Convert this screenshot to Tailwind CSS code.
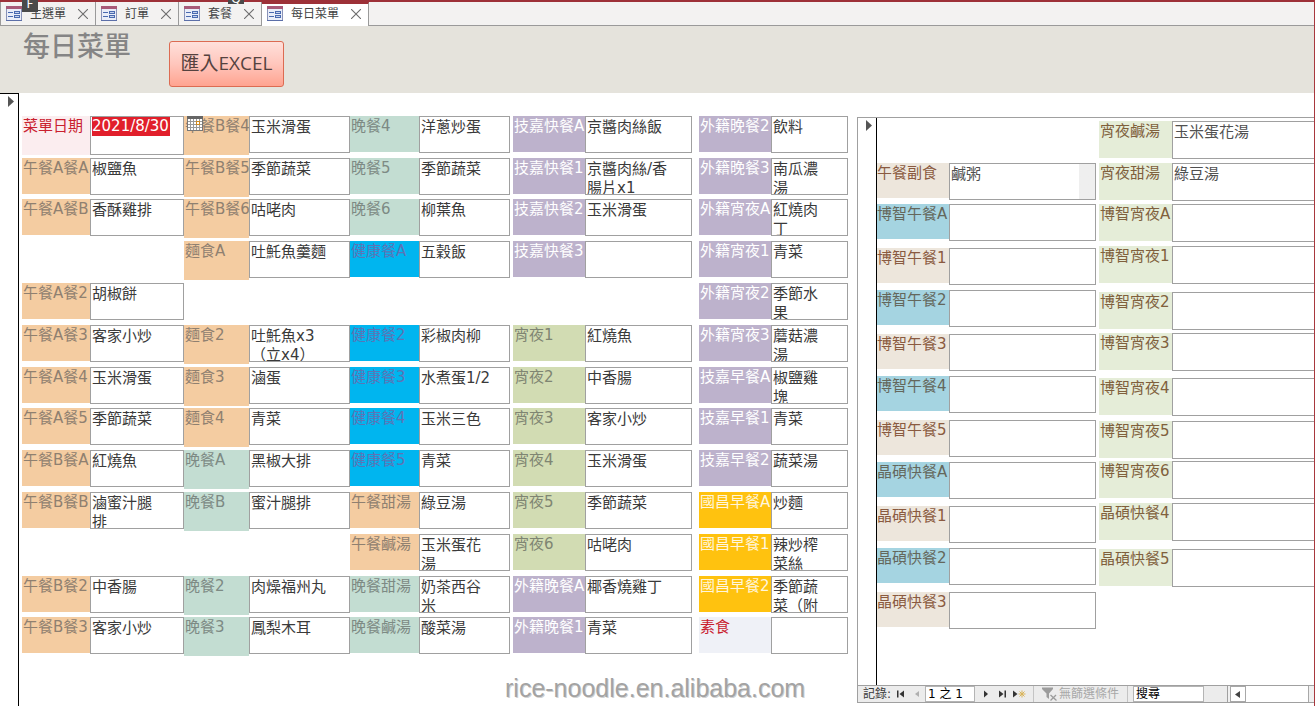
<!doctype html>
<html lang="zh-Hant">
<head>
  <meta charset="UTF-8" />
  <meta name="viewport" content="width=device-width, initial-scale=1.0" />
  <title>每日菜單</title>
  <script src="https://cdn.jsdelivr.net/npm/@tailwindcss/browser@4"></script>
</head>
<body class="relative flex h-screen flex-col overflow-hidden border-r border-[#a8383e] bg-white font-['DejaVu_Sans','Noto_Sans_CJK_TC',sans-serif] text-[15px] leading-[19px] text-[#3a3a3a]">

  <!-- Icons shared by the tabs -->
  <svg class="hidden" aria-hidden="true">
    <symbol id="form-icon" viewBox="0 0 16 16">
      <rect x="0.5" y="0.5" width="15" height="14" fill="#e9edf8" stroke="#8a93b8" />
      <rect x="0" y="0" width="16" height="3" fill="#a85a78" />
      <rect x="0" y="14" width="16" height="1" fill="#5c6fa8" />
      <path d="M2 6.5h5M2 10.5h5" stroke="#4a6ab0" stroke-width="1.2" />
      <rect x="8.5" y="5.5" width="5" height="2" fill="#c5d3ee" stroke="#4a6ab0" />
      <rect x="8.5" y="9.5" width="5" height="2" fill="#c5d3ee" stroke="#4a6ab0" />
    </symbol>
    <symbol id="close-icon" viewBox="0 0 10 10">
      <path d="M0 0l10 10M10 0l-10 10" stroke="#6e6e6e" stroke-width="1.1" />
    </symbol>
  </svg>

  <!-- Tabs -->
  <nav class="flex h-[26px] shrink-0 border-t-2 border-[#9d3138] bg-[#f3f2f1] text-xs leading-[22px] text-[#444444]">
    <div class="flex items-center border-r border-b border-l border-[#9a9a9a] pr-[7px] pl-[5px]">
      <svg class="size-4"><use href="#form-icon" /></svg>
      <a href="#" class="ml-2">主選單</a>
      <button class="ml-3" aria-label="關閉主選單"><svg class="size-2.5"><use href="#close-icon" /></svg></button>
    </div>
    <div class="flex items-center border-r border-b border-[#9a9a9a] pr-[7px] pl-[5px]">
      <svg class="size-4"><use href="#form-icon" /></svg>
      <a href="#" class="ml-2">訂單</a>
      <button class="ml-3" aria-label="關閉訂單"><svg class="size-2.5"><use href="#close-icon" /></svg></button>
    </div>
    <div class="flex items-center border-r border-b border-[#9a9a9a] pr-[7px] pl-[5px]">
      <svg class="size-4"><use href="#form-icon" /></svg>
      <a href="#" class="ml-2">套餐</a>
      <button class="ml-3" aria-label="關閉套餐"><svg class="size-2.5"><use href="#close-icon" /></svg></button>
    </div>
    <div class="flex items-center border-t-2 border-r border-t-[#9d3138] border-r-[#9a9a9a] bg-white pr-[7px] pb-[3px] pl-[5px]">
      <svg class="size-4"><use href="#form-icon" /></svg>
      <a href="#" class="ml-2" aria-current="page">每日菜單</a>
      <button class="ml-3" aria-label="關閉每日菜單"><svg class="size-2.5"><use href="#close-icon" /></svg></button>
    </div>
    <div class="flex-1 border-b border-[#9a9a9a]"></div>
  </nav>

  <!-- Key tips over the tabs -->
  <span class="absolute top-0 left-[22px] h-3 w-4 overflow-hidden bg-[#4a4a4a] text-center text-xs leading-[8px] text-white">F</span>
  <span class="absolute top-0 left-[228px] flex h-1 w-4 items-end justify-center overflow-hidden bg-[#4a4a4a] text-xs leading-[10px] text-white">Q</span>

  <!-- Form header -->
  <header class="flex h-[67px] shrink-0 bg-[#e5e3dc] pl-[23px]">
    <h1 class="mt-[7px] text-[27px] leading-[28px] font-medium text-[#858585]">每日菜單</h1>
    <button class="mt-[15px] ml-[38px] h-[46px] w-[115px] rounded-[3px] border border-[#dc6b52] bg-linear-to-b from-[#ffe0db] via-[#ffc6bc] to-[#ffa390] pb-0.5 font-['Open_Sans','Noto_Sans_CJK_TC',sans-serif] text-[19px] text-[#55423f]">匯入EXCEL</button>
  </header>

  <main class="flex min-h-0 flex-1">
    <!-- Record selector -->
    <div class="w-[19px] shrink-0 border-t border-r border-black pt-0.5 pl-2">
      <svg class="h-[11px] w-[6px]" viewBox="0 0 6 11"><path d="M0 0l6 5.5L0 11z" fill="#555" /></svg>
    </div>

    <div class="grid min-w-0 flex-1 grid-cols-[838fr_457fr]">
      <form id="menu" class="grid grid-cols-[162fr_166fr_163fr_186fr_149fr] grid-rows-[42px_41px_42px_42px_42px_42px_41px_42px_42px_42px_42px_41px_37px] pt-[23px] pr-[9px] pl-[3px]"></form>

      <!-- Subform -->
      <section class="mt-6 mb-[3px] flex min-h-0 min-w-0 flex-col border-t border-l border-[#a0a0a0]">
        <div class="flex min-h-0 flex-1">
          <div class="w-[19px] shrink-0 border-r border-black pt-0.5 pl-2">
            <svg class="h-[11px] w-[6px]" viewBox="0 0 6 11"><path d="M0 0l6 5.5L0 11z" fill="#555" /></svg>
          </div>
          <div class="grid flex-1 grid-cols-[219fr_215fr] content-start gap-x-[3px] pt-[3px] text-[#505050]">
            <div id="sub-left" class="grid grid-rows-[41px_44px_42px_44px_42px_44px_42px_44px_42px_44px_37px] content-start pt-[42px]"></div>
            <div id="sub-right" class="grid grid-rows-[42px_41px_42px_46px_41px_45px_43px_40px_42px_46px_38px] content-start"></div>
          </div>
        </div>

        <!-- Record navigation -->
        <div class="flex h-[18px] shrink-0 items-stretch border-t border-b border-[#a0a0a0] bg-[#ececec] text-xs leading-4">
          <span class="w-[34px] shrink-0 pl-[5px] whitespace-nowrap">記錄:</span>
          <button aria-label="第一筆" class="w-4 pl-[5px]"><svg class="h-2 w-[7px]" viewBox="0 0 7 8"><path d="M0 0.5h1.5v7H0zM7 0.5v7L2.5 4z" fill="#333" /></svg></button>
          <button aria-label="上一筆" class="w-[17px] pl-[7px]"><svg class="h-2 w-1" viewBox="0 0 4 8"><path d="M4 1v6L0 4z" fill="#b0b0b0" /></svg></button>
          <input aria-label="目前記錄" value="1 之 1" class="w-[50px] border border-[#b4b4b4] bg-white pl-0.5 text-black" />
          <button aria-label="下一筆" class="w-5 pl-[9px]"><svg class="h-2 w-1" viewBox="0 0 4 8"><path d="M0 0.5v7L4 4z" fill="#333" /></svg></button>
          <button aria-label="最後一筆" class="w-[14px] pl-1"><svg class="h-2 w-[7px]" viewBox="0 0 7 8"><path d="M5.5 0.5H7v7H5.5zM0 0.5v7L4.5 4z" fill="#333" /></svg></button>
          <button aria-label="新記錄" class="w-6 pl-1"><svg class="h-2 w-[13px]" viewBox="0 0 13 8"><path d="M0 0.5v7L4.5 4z" fill="#333" /><path d="M9 0.5v7M5.5 4h7M6.5 1.5l5 5M11.5 1.5l-5 5" stroke="#d9b45a" /></svg></button>
          <button disabled class="flex items-center border-x border-[#c4c4c4] px-2 text-[#a8a8a8]">
            <svg class="mr-0.5 h-[14px] w-[15px]" viewBox="0 0 15 14"><path d="M0 0.5h11v1.5L7 6.5V12L4.5 10V6.5L0 2z" fill="#9c9c9c" /><path d="M8.5 8l6 5.5M14 8l-5.5 5.5" stroke="#9c9c9c" stroke-width="1.3" /></svg>
            無篩選條件
          </button>
          <input aria-label="搜尋" value="搜尋" class="ml-[5px] w-[71px] min-w-0 border border-[#b4b4b4] bg-white pl-0.5 text-black" />
          <span class="w-6 border-r border-[#a0a0a0]"></span>
          <div class="flex min-w-0 flex-1 bg-[#f0f0f0] pl-0.5">
            <button aria-label="向左捲動" class="w-4 border border-[#a8a8a8] bg-white pl-1"><svg class="h-[7px] w-[5px]" viewBox="0 0 5 7"><path d="M5 0v7L0 3.5z" fill="#444" /></svg></button>
            <div class="mr-[5px] flex-1 border-r border-[#a8a8a8] bg-white"></div>
          </div>
        </div>
      </section>
    </div>
  </main>

  <p class="pointer-events-none absolute top-[674px] left-[505px] font-['Liberation_Sans',sans-serif] text-[25px] leading-[28px] text-[#a3a3a3] text-shadow-[1px_1px_0_#8a8a8a66]">rice-noodle.en.alibaba.com</p>

  <script>
    // Label colours by meal group
    const colors = {
      lunch: 'bg-[#f4cca1] text-[#8f8070]',
      dinner: 'bg-[#c3ddd2] text-[#7d8a84]',
      health: 'bg-[#00b5ef] text-[#5d73b5]',
      night: 'bg-[#d2dcb3] text-[#7f8572]',
      purple: 'bg-[#bdb2cc] text-white',
      gold: 'bg-[#ffc20f] text-[#fff6dc]',
      veg: 'bg-[#eff1f7] text-[#c9202e]',
      beige: 'bg-[#ede6dc] text-[#8a5a40]',
      aqua: 'bg-[#a5d4e1] text-[#64675c]',
      pale: 'bg-[#e5edd8] text-[#80603c]',
    };

    // Every column holds one entry per row, null leaves the slot empty
    const columns = [
      { label: 'w-[68px] h-9', field: '', rows: [
        'date',
        ['午餐A餐A', '椒鹽魚', 'lunch'], ['午餐A餐B', '香酥雞排', 'lunch'], null,
        ['午餐A餐2', '胡椒餅', 'lunch'], ['午餐A餐3', '客家小炒', 'lunch'], ['午餐A餐4', '玉米滑蛋', 'lunch'],
        ['午餐A餐5', '季節蔬菜', 'lunch'], ['午餐B餐A', '紅燒魚', 'lunch'], ['午餐B餐B', '滷蜜汁腿排', 'lunch'], null,
        ['午餐B餐2', '中香腸', 'lunch'], ['午餐B餐3', '客家小炒', 'lunch'] ] },
      { label: 'w-[65px] h-[39px]', field: '', rows: [
        ['午餐B餐4', '玉米滑蛋', 'lunch'], ['午餐B餐5', '季節蔬菜', 'lunch'], ['午餐B餐6', '咕咾肉', 'lunch'],
        ['麵食A', '吐魠魚羹麵', 'lunch'], null, ['麵食2', '吐魠魚x3（立x4）', 'lunch'], ['麵食3', '滷蛋', 'lunch'],
        ['麵食4', '青菜', 'lunch'], ['晚餐A', '黑椒大排', 'dinner'], ['晚餐B', '蜜汁腿排', 'dinner'], null,
        ['晚餐2', '肉燥福州丸', 'dinner'], ['晚餐3', '鳳梨木耳', 'dinner'] ] },
      { label: 'w-[69px] h-9', field: 'mr-[3px]', rows: [
        ['晚餐4', '洋蔥炒蛋', 'dinner'], ['晚餐5', '季節蔬菜', 'dinner'], ['晚餐6', '柳葉魚', 'dinner'],
        ['健康餐A', '五穀飯', 'health'], null, ['健康餐2', '彩椒肉柳', 'health'], ['健康餐3', '水煮蛋1/2', 'health'],
        ['健康餐4', '玉米三色', 'health'], ['健康餐5', '青菜', 'health'], ['午餐甜湯', '綠豆湯', 'lunch'],
        ['午餐鹹湯', '玉米蛋花湯', 'lunch'], ['晚餐甜湯', '奶茶西谷米', 'dinner'], ['晚餐鹹湯', '酸菜湯', 'dinner'] ] },
      { label: 'w-[72px] h-9', field: 'mr-[7px]', rows: [
        ['技嘉快餐A', '京醬肉絲飯', 'purple'], ['技嘉快餐1', '京醬肉絲/香腸片x1', 'purple'], ['技嘉快餐2', '玉米滑蛋', 'purple'],
        ['技嘉快餐3', '', 'purple'], null, ['宵夜1', '紅燒魚', 'night'], ['宵夜2', '中香腸', 'night'],
        ['宵夜3', '客家小炒', 'night'], ['宵夜4', '玉米滑蛋', 'night'], ['宵夜5', '季節蔬菜', 'night'],
        ['宵夜6', '咕咾肉', 'night'], ['外籍晚餐A', '椰香燒雞丁', 'purple'], ['外籍晚餐1', '青菜', 'purple'] ] },
      { label: 'w-[72px] h-9', field: '', rows: [
        ['外籍晚餐2', '飲料', 'purple'], ['外籍晚餐3', '南瓜濃湯', 'purple'], ['外籍宵夜A', '紅燒肉丁', 'purple'],
        ['外籍宵夜1', '青菜', 'purple'], ['外籍宵夜2', '季節水果', 'purple'], ['外籍宵夜3', '蘑菇濃湯', 'purple'],
        ['技嘉早餐A', '椒鹽雞塊', 'purple'], ['技嘉早餐1', '青菜', 'purple'], ['技嘉早餐2', '蔬菜湯', 'purple'],
        ['國昌早餐A', '炒麵', 'gold'], ['國昌早餐1', '辣炒榨菜絲', 'gold'], ['國昌早餐2', '季節蔬菜（附', 'gold'],
        ['素食', '', 'veg'] ] },
    ];

    const subLeft = [
      ['午餐副食', '鹹粥', 'beige'], ['博智午餐A', '', 'aqua'], ['博智午餐1', '', 'beige'], ['博智午餐2', '', 'aqua'],
      ['博智午餐3', '', 'beige'], ['博智午餐4', '', 'aqua'], ['博智午餐5', '', 'beige'], ['晶碩快餐A', '', 'aqua'],
      ['晶碩快餐1', '', 'beige'], ['晶碩快餐2', '', 'aqua'], ['晶碩快餐3', '', 'beige'],
    ];
    const subRight = [
      ['宵夜鹹湯', '玉米蛋花湯', 'pale'], ['宵夜甜湯', '綠豆湯', 'pale'], ['博智宵夜A', '', 'pale'], ['博智宵夜1', '', 'pale'],
      ['博智宵夜2', '', 'pale'], ['博智宵夜3', '', 'pale'], ['博智宵夜4', '', 'pale'], ['博智宵夜5', '', 'pale'],
      ['博智宵夜6', '', 'pale'], ['晶碩快餐4', '', 'pale'], ['晶碩快餐5', '', 'pale'],
    ];

    let nextId = 0;

    function cell([name, value, color], labelClass, fieldClass) {
      const id = 'field-' + nextId++;
      return `<div class="flex min-w-0 items-start">
        <label for="${id}" class="shrink-0 pt-px whitespace-nowrap ${labelClass} ${colors[color]}">${name}</label>
        <textarea id="${id}" class="block min-w-0 flex-1 resize-none overflow-hidden border border-[#a0a0a0] bg-white pt-px pr-[17px] pl-px ${fieldClass}">${value}</textarea>
      </div>`;
    }

    const dateCell = `<div class="relative flex min-w-0 items-start">
      <label for="menu-date" class="h-[39px] w-[68px] shrink-0 bg-[#fbedef] pt-px pl-px text-[#c9202e]">菜單日期</label>
      <div class="h-[39px] min-w-0 flex-1 border border-[#a0a0a0] bg-white pl-px">
        <input id="menu-date" value="2021/8/30" class="block w-[78px] bg-[#e11f2b] text-white" />
      </div>
      <button type="button" aria-label="選擇日期" class="absolute top-0 -right-[19px]">
        <svg class="size-4" viewBox="0 0 16 16">
          <rect x="0.5" y="0.5" width="15" height="14" fill="#fff" stroke="#777" />
          <rect width="16" height="3" fill="#666" />
          <path d="M3.5 3v11M6.5 3v11M9.5 3v11M12.5 3v11M1 5.5h14M1 8.5h14M1 11.5h14" stroke="#9a9a9a" />
          <rect x="9.5" y="5.5" width="3" height="3" fill="#fff" stroke="#d08a1e" />
        </svg>
      </button>
    </div>`;

    let html = '';
    for (let row = 0; row < 13; row++) {
      for (const col of columns) {
        const item = col.rows[row];
        if (item === 'date') html += dateCell;
        else if (!item) html += '<div></div>';
        else html += cell(item, col.label + ' pl-px', 'h-[37px] ' + col.field);
      }
    }
    document.getElementById('menu').innerHTML = html;

    document.getElementById('sub-left').innerHTML = subLeft
      .map((item, i) => cell(item, 'w-[72px] h-[35px]', i === 0 ? 'h-[37px] bg-linear-to-l from-[#efefef] from-[16px] to-white to-[16px]' : 'h-[37px]'))
      .join('');
    document.getElementById('sub-right').innerHTML = subRight
      .map((item) => cell(item, 'w-[73px] h-[37px] pl-px', 'h-[38px] border-r-0'))
      .join('');
  </script>
</body>
</html>
